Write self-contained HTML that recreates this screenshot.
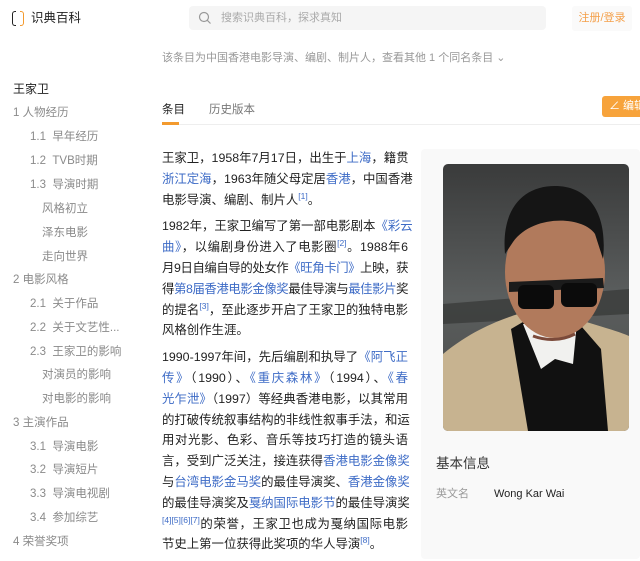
<!DOCTYPE html>
<html><head><meta charset="utf-8"><style>
*{margin:0;padding:0;box-sizing:border-box}
body{width:640px;height:561px;overflow:hidden;background:#fff;font-family:"Liberation Sans","Noto Sans CJK SC",sans-serif;position:relative;color:#333}
.a{position:absolute;white-space:nowrap;line-height:14px}
.toc{font-size:11.5px;color:#8a8a8a}
.txt{position:absolute;left:162px;top:148px;width:246px;font-size:12.4px;line-height:20.8px;color:#222}
.txt p{margin-bottom:6px}
.txt span.l{display:block;white-space:nowrap;text-align:justify;text-align-last:justify}
.txt span.l.e{text-align-last:left}
.txt span.t{letter-spacing:-0.5px}
a,.lk{color:#3d6bc6;text-decoration:none}
sup{font-size:8.5px;color:#3d6bc6;vertical-align:5px;line-height:0}
</style></head><body>
<!-- header -->
<div class="a" style="left:12px;top:11px;width:4px;height:15px;border:1.5px solid #222;border-right:none;border-radius:3px 0 0 3px"></div>
<div class="a" style="left:20px;top:11px;width:4px;height:15px;border:1.5px solid #f39a2e;border-left:none;border-radius:0 3px 3px 0"></div>
<div class="a" style="left:31px;top:11px;font-size:12.5px;color:#222">识典百科</div>
<div class="a" style="left:189px;top:6px;width:357px;height:24px;background:#f5f5f5;border-radius:4px"></div>
<svg class="a" style="left:198px;top:11px" width="14" height="14" viewBox="0 0 14 14"><circle cx="6" cy="6" r="4.5" fill="none" stroke="#999" stroke-width="1.2"/><path d="M9.3 9.3L12.5 12.5" stroke="#999" stroke-width="1.2"/></svg>
<div class="a" style="left:221px;top:11px;font-size:11px;color:#aaa">搜索识典百科，探求真知</div>
<div class="a" style="left:572px;top:6px;width:60px;height:25px;background:#fafafa;border-radius:3px;font-size:11px;color:#f4a04a;text-align:center;line-height:25px">注册/登录</div>
<div class="a" style="left:162px;top:51px;font-size:11px;color:#999">该条目为中国香港电影导演、编剧、制片人，查看其他 1 个同名条目 ⌄</div>
<!-- tabs -->
<div class="a" style="left:162px;top:103px;font-size:11.5px;color:#222">条目</div>
<div class="a" style="left:209px;top:103px;font-size:11.5px;color:#777">历史版本</div>
<div class="a" style="left:162px;top:124px;width:478px;height:1px;background:#eee"></div>
<div class="a" style="left:162px;top:122px;width:17px;height:3px;background:#f39a2e"></div>
<div class="a" style="left:602px;top:96px;width:44px;height:21px;background:#f7a33b;border-radius:3px;color:#fff;font-size:11px;line-height:21px;padding-left:7px">∠ 编辑</div>
<!-- toc -->
<div class="a" style="left:13px;top:82px;font-size:12px;color:#222">王家卫</div>
<div class="a toc" style="left:13px;top:106px">1 人物经历</div>
<div class="a toc" style="left:30px;top:130px">1.1 &nbsp;早年经历</div>
<div class="a toc" style="left:30px;top:154px">1.2 &nbsp;TVB时期</div>
<div class="a toc" style="left:30px;top:178px">1.3 &nbsp;导演时期</div>
<div class="a toc" style="left:42px;top:202px">风格初立</div>
<div class="a toc" style="left:42px;top:226px">泽东电影</div>
<div class="a toc" style="left:42px;top:250px">走向世界</div>
<div class="a toc" style="left:13px;top:273px">2 电影风格</div>
<div class="a toc" style="left:30px;top:297px">2.1 &nbsp;关于作品</div>
<div class="a toc" style="left:30px;top:321px">2.2 &nbsp;关于文艺性...</div>
<div class="a toc" style="left:30px;top:345px">2.3 &nbsp;王家卫的影响</div>
<div class="a toc" style="left:42px;top:368px">对演员的影响</div>
<div class="a toc" style="left:42px;top:392px">对电影的影响</div>
<div class="a toc" style="left:13px;top:416px">3 主演作品</div>
<div class="a toc" style="left:30px;top:440px">3.1 &nbsp;导演电影</div>
<div class="a toc" style="left:30px;top:463px">3.2 &nbsp;导演短片</div>
<div class="a toc" style="left:30px;top:487px">3.3 &nbsp;导演电视剧</div>
<div class="a toc" style="left:30px;top:511px">3.4 &nbsp;参加综艺</div>
<div class="a toc" style="left:13px;top:535px">4 荣誉奖项</div>
<!-- card -->
<div class="a" style="left:421px;top:149px;width:219px;height:410px;background:#f9f9f9;border-radius:4px"></div>
<!-- text -->
<div class="txt">
<p><span class="l">王家卫，1958年7月17日，出生于<a>上海</a>，籍贯</span><span class="l"><a>浙江定海</a>，1963年随父母定居<a>香港</a>，中国香港</span><span class="l e">电影导演、编剧、制片人<sup>[1]</sup>。</span></p>
<p><span class="l">1982年，王家卫编写了第一部电影剧本<a>《彩云</a></span><span class="l"><a>曲》</a>，以编剧身份进入了电影圈<sup>[2]</sup>。1988年6</span><span class="l t">月9日自编自导的处女作<a>《旺角卡门》</a>上映，获</span><span class="l t">得<a>第8届香港电影金像奖</a>最佳导演与<a>最佳影片</a>奖</span><span class="l">的提名<sup>[3]</sup>，至此逐步开启了王家卫的独特电影</span><span class="l e">风格创作生涯。</span></p>
<p><span class="l">1990-1997年间，先后编剧和执导了<a>《阿飞正</a></span><span class="l"><a>传》</a>（1990）、<a>《重庆森林》</a>（1994）、<a>《春</a></span><span class="l"><a>光乍泄》</a>（1997）等经典香港电影，以其常用</span><span class="l">的打破传统叙事结构的非线性叙事手法，和运</span><span class="l">用对光影、色彩、音乐等技巧打造的镜头语</span><span class="l">言，受到广泛关注，接连获得<a>香港电影金像奖</a></span><span class="l">与<a>台湾电影金马奖</a>的最佳导演奖、<a>香港金像奖</a></span><span class="l">的最佳导演奖及<a>戛纳国际电影节</a>的最佳导演奖</span><span class="l"><sup>[4][5][6][7]</sup>的荣誉，王家卫也成为戛纳国际电影</span><span class="l e">节史上第一位获得此奖项的华人导演<sup>[8]</sup>。</span></p>
</div>
<svg class="a" style="left:443px;top:164px;border-radius:5px" width="186" height="267" viewBox="0 0 186 267">
<defs><linearGradient id="bg" x1="0" y1="0" x2="0" y2="1"><stop offset="0" stop-color="#3a3b3b"/><stop offset=".5" stop-color="#5b5e5e"/><stop offset="1" stop-color="#494a48"/></linearGradient></defs>
<rect width="186" height="267" fill="url(#bg)"/>
<path d="M0 140 L186 125 L186 150 L0 160Z" fill="#2e302f" opacity=".6"/>
<path d="M0 190 C30 165 60 155 75 150 L120 150 C140 158 170 165 186 172 L186 267 L0 267Z" fill="#c7b390"/>
<path d="M68 165 L85 267 L165 267 L158 185 L132 155 L85 155Z" fill="#111"/>
<path d="M80 160 L98 205 L112 195 L130 200 L134 158Z" fill="#f1f1ef"/>
<ellipse cx="112" cy="108" rx="50" ry="66" fill="#b17a5c"/>
<path d="M62 90 C58 45 80 22 112 22 C145 22 165 48 160 95 L152 70 C140 52 90 50 70 78Z" fill="#151515"/>
<path d="M66 118 L160 114 L161 124 L66 128Z" fill="#1b1b1b"/>
<rect x="75" y="121" width="36" height="24" rx="6" fill="#0b0b0b"/>
<rect x="118" y="119" width="36" height="24" rx="6" fill="#0b0b0b"/>
<path d="M90 172 Q112 180 132 170" stroke="#7b4a3a" stroke-width="3" fill="none"/>
</svg>
<div class="a" style="left:436px;top:457px;font-size:13.5px;color:#333">基本信息</div>
<div class="a" style="left:436px;top:487px;font-size:11px;color:#999">英文名</div>
<div class="a" style="left:494px;top:487px;font-size:11px;color:#222">Wong Kar Wai</div>
</body></html>
